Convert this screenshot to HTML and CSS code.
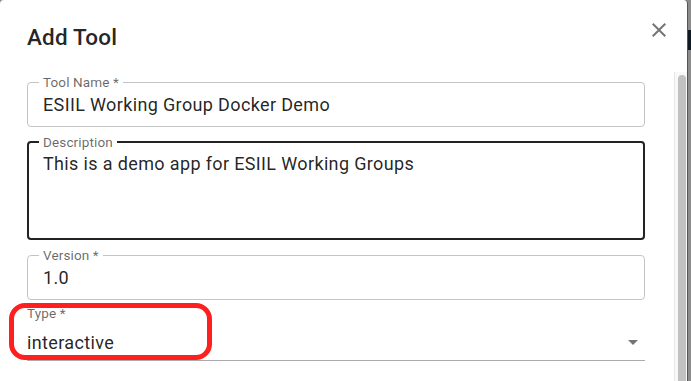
FILE: index.html
```html
<!DOCTYPE html>
<html lang="en">
  <head>
    <meta charset="UTF-8" />
    <meta name="viewport" content="width=device-width, initial-scale=1.0" />
    <title>Add Tool</title>
    <link rel="stylesheet" href="styles.css">
  </head>
  <body>
    <div class="dialog">
      <header class="dialog-title">
        <h2>Add Tool</h2>
        <button class="close-btn" aria-label="close">
          <svg viewBox="0 0 24 24" width="24" height="24"><path d="M19 6.41 17.59 5 12 10.59 6.41 5 5 6.41 10.59 12 5 17.59 6.41 19 12 13.41 17.59 19 19 17.59 13.41 12z"/></svg>
        </button>
      </header>
      <div class="dialog-body">
        <form class="dialog-content">
          <fieldset class="field">
            <legend>Tool Name *</legend>
            <div class="field-value">ESIIL Working Group Docker Demo</div>
          </fieldset>
          <fieldset class="field focused">
            <legend>Description</legend>
            <div class="field-value multiline">This is a demo app for ESIIL Working Groups</div>
          </fieldset>
          <fieldset class="field">
            <legend>Version *</legend>
            <div class="field-value">1.0</div>
          </fieldset>
          <div class="select-field">
            <label>Type *</label>
            <div class="select-row">
              <span>interactive</span>
              <svg viewBox="0 0 24 24" width="24" height="24"><path d="M7 10l5 5 5-5z"/></svg>
            </div>
            <!-- red highlight drawn over the field -->
            <div class="annotation"></div>
          </div>
        </form>
        <div class="scrollbar"><div class="scrollbar-thumb"></div></div>
      </div>
    </div>
  </body>
</html>
```

FILE: styles.css
```css
* {
  margin: 0;
  padding: 0;
  box-sizing: border-box;
}

body {
  font-family: Roboto, "Liberation Sans", sans-serif;
  background: linear-gradient(to bottom, #8c8c8c 30px, #0f1a24 30px, #0f1a24 50px, #8c8c8c 50px);
  height: 100vh;
  overflow: hidden;
  color: rgba(0, 0, 0, 0.87);
}

.dialog {
  width: 688px;
  height: 100vh;
  background: #fff;
  border-radius: 4px 4px 0 0;
  border-right: 1px solid #555;
  display: flex;
  flex-direction: column;
}

.dialog-title {
  display: flex;
  justify-content: space-between;
  align-items: flex-start;
  padding: 21px 16px 19px 27px;
}
.dialog-title h2 {
  font-size: 22.5px;
  line-height: 32px;
  font-weight: 500;
  letter-spacing: 0.0075em;
}
.close-btn {
  border: none;
  background: none;
  margin-top: -3px;
  display: flex;
}
.close-btn svg {
  fill: #757575;
}

.dialog-body {
  flex: 1;
  display: flex;
}

.dialog-content {
  flex: 1;
  padding: 3px 29px 0 27px;
  display: flex;
  flex-direction: column;
  gap: 8px;
}

.field {
  border: 1px solid #c4c4c4;
  border-radius: 4px;
  padding: 4px 15px 10px;
}
.field legend {
  font-size: 13.5px;
  line-height: 14px;
  color: rgba(0, 0, 0, 0.6);
  padding: 0 4px;
  margin-left: -4px;
  letter-spacing: 0.01em;
}
.field.focused {
  border: 2px solid #222;
  padding: 3px 14px 17px;
}
.field-value {
  font-size: 18px;
  line-height: 23px;
  letter-spacing: 0.02em;
}
.field-value.multiline {
  min-height: 69px;
}

.select-field {
  position: relative;
  margin-top: -2px;
}
.select-field label {
  display: block;
  font-size: 13.5px;
  line-height: 15px;
  color: rgba(0, 0, 0, 0.6);
  letter-spacing: 0.01em;
}
.select-row {
  margin-top: 9px;
  display: flex;
  justify-content: space-between;
  align-items: center;
  font-size: 18px;
  line-height: 23px;
  letter-spacing: 0.02em;
  padding-bottom: 6px;
  border-bottom: 1px solid #ababab;
}
.select-row svg {
  fill: rgba(0, 0, 0, 0.54);
}

.annotation {
  position: absolute;
  top: -3px;
  left: -18px;
  width: 203px;
  height: 57px;
  border: 5px solid #ff1f1f;
  border-radius: 16px;
  pointer-events: none;
}

.scrollbar {
  width: 13px;
  background: #f8f8f8;
  border-left: 1px solid #e6e6e6;
  padding: 3px 1px 0 3px;
}
.scrollbar-thumb {
  height: 100%;
  background: #c1c1c1;
  border-radius: 4px 4px 0 0;
}
```
